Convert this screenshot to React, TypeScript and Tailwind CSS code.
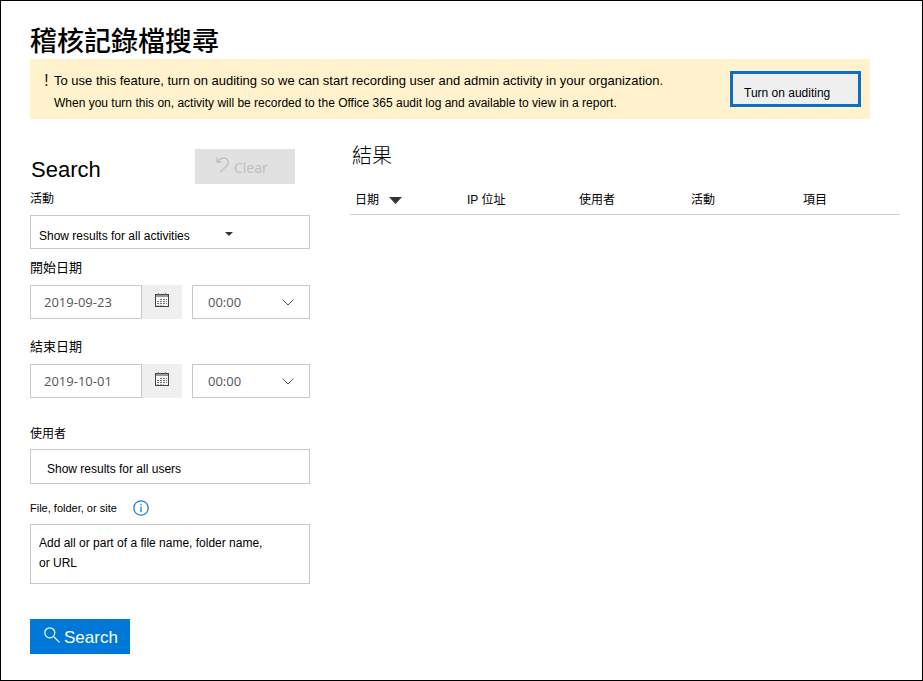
import React from "react";

const UI = "font-['Liberation_Sans','Noto_Sans_CJK_TC',sans-serif]";
const HUMANIST = "font-['Open_Sans','Noto_Sans_CJK_TC',sans-serif]";

function CalendarIcon() {
  return (
    <svg width="14" height="14" viewBox="0 0 14 14" aria-hidden="true" shapeRendering="crispEdges">
      <rect x="0" y="1" width="14" height="13" fill="#444" />
      <rect x="1" y="2" width="12" height="2" fill="#999" />
      <rect x="1" y="4" width="12" height="9" fill="#f4f4f4" />
      <path d="M3.5 0v2M10.5 0v2" stroke="#777" />
      <path d="M5 6.500h7M2 8.500h10M2 10.500h10" stroke="#777" strokeDasharray="2 1" />
      <path d="M2 12.500h7" stroke="#aaa" strokeDasharray="2 1" />
    </svg>
  );
}

function UndoIcon() {
  return (
    <svg width="14" height="16" viewBox="0 0 14 16" fill="none" stroke="currentColor" strokeWidth="1.3" aria-hidden="true">
      <path d="M1 0.5V5h4.5" />
      <path d="M1 5C3 2.2 5.2 1.2 7.6 1.2c2.700 0 4.600 1.900 4.600 4.200 0 1.500-.6 2.500-1.600 3.500L4 15.400" />
    </svg>
  );
}

function MagnifierIcon() {
  return (
    <svg width="16" height="16" viewBox="0 0 16 16" fill="none" stroke="currentColor" strokeWidth="1.2" aria-hidden="true">
      <circle cx="5.800" cy="5.800" r="5" />
      <path d="M9.400 9.400L15.500 15.400" />
    </svg>
  );
}

function InfoIcon() {
  return (
    <svg width="16" height="16" viewBox="0 0 16 16" fill="none" aria-hidden="true">
      <circle cx="8" cy="8" r="7.200" stroke="#1a7fd4" strokeWidth="1.300" />
      <path d="M8 6.500V12M8 4v1.300" stroke="#1a7fd4" strokeWidth="1.300" />
    </svg>
  );
}

function DateRow({ id, label, value }: { id: string; label: string; value: string }) {
  return (
    <div>
      <label htmlFor={id} className="block text-[13px] leading-5">
        {label}
      </label>
      <div className="mt-[7px] flex">
        <input
          id={id}
          type="text"
          defaultValue={value}
          className={`h-[34px] w-28 border border-[#c8c8c8] bg-white px-[13px] text-[13px] text-[#555] ${HUMANIST}`}
        />
        <button type="button" aria-label={`${label} calendar`} className="flex h-[34px] w-10 justify-center bg-[#efefef] pt-2">
          <CalendarIcon />
        </button>
        <div className="relative ml-2.5 flex-1">
          <select
            aria-label={`${label} time`}
            className={`h-[34px] w-full appearance-none border border-[#c8c8c8] bg-white px-[15px] pt-0.5 text-[13px] text-[#555] ${HUMANIST}`}
          >
            <option>00:00</option>
          </select>
          <svg className="pointer-events-none absolute right-4 top-3.5" width="12" height="7" viewBox="0 0 12 7" fill="none" stroke="#555" aria-hidden="true">
            <path d="M0.500 0.500L6 6L11.500 0.500" />
          </svg>
        </div>
      </div>
    </div>
  );
}

function SearchForm() {
  return (
    <form className="w-[280px] shrink-0 pt-[30px]" onSubmit={(e) => e.preventDefault()}>
      <div className="flex items-start justify-between pr-[15px]">
        <h2 className="pl-px pt-2 text-[22px] leading-[26px]">Search</h2>
        <button
          type="button"
          className={`flex h-[35px] w-[100px] items-start gap-1 bg-[#e1e1e1] pl-[21px] pt-2 text-[#bdbdbd] ${HUMANIST}`}
        >
          <UndoIcon />
          <span className="text-[14px] leading-[22px]">Clear</span>
        </button>
      </div>

      <label htmlFor="activities" className="mt-[5px] block text-[12px] leading-5">
        活動
      </label>
      <div className="relative mt-1.5">
        <select id="activities" className="block h-[34px] w-full appearance-none border border-[#c8c8c8] bg-white px-2 pt-2 text-[12px]">
          <option>Show results for all activities</option>
        </select>
        <svg className="pointer-events-none absolute left-[195px] top-[17px]" width="8" height="4" viewBox="0 0 8 4" aria-hidden="true">
          <path d="M0 0h8L4 4z" fill="#333" />
        </svg>
      </div>

      <div className="mt-[9px]">
        <DateRow id="start-date" label="開始日期" value="2019-09-23" />
      </div>
      <div className="mt-[18px]">
        <DateRow id="end-date" label="結束日期" value="2019-10-01" />
      </div>

      <label htmlFor="users" className="mt-[26px] block text-[12px] leading-5">
        使用者
      </label>
      <input
        id="users"
        type="text"
        defaultValue="Show results for all users"
        className="mt-[5px] block h-[35px] w-full border border-[#c8c8c8] bg-white px-4 pt-1 text-[12px]"
      />

      <div className="mt-3.5 flex items-center">
        <label htmlFor="file" className="text-[11px] leading-5">
          File, folder, or site
        </label>
        <button type="button" aria-label="Info" className="ml-4">
          <InfoIcon />
        </button>
      </div>
      <textarea
        id="file"
        defaultValue={"Add all or part of a file name, folder name,\nor URL"}
        className="mt-1.5 block h-[60px] w-full resize-none overflow-hidden border border-[#c8c8c8] bg-white px-2 py-2 text-[12px] leading-5"
      />

      <button type="submit" className="mt-[35px] flex h-[35px] w-[100px] items-start gap-1 bg-[#0078d7] pl-3.5 pt-2 text-white">
        <MagnifierIcon />
        <span className="text-[17px] leading-[22px]">Search</span>
      </button>
    </form>
  );
}

function Results() {
  return (
    <section className="min-w-0 flex-1 pt-[25px]">
      <h2 className="pl-0.5 text-[20px] font-light leading-6">結果</h2>
      <table className="mt-[22px] w-full table-fixed text-left text-[12px] leading-5">
        <thead>
          <tr className="border-b border-[#d0d0d0]">
            <th scope="col" className="w-28 pb-1 pl-[5px] font-normal">
              <button type="button" className="flex items-center gap-2.5">
                日期
                <svg width="13" height="7" viewBox="0 0 13 7" aria-hidden="true">
                  <path d="M0 0h13L6.500 7z" fill="#333" />
                </svg>
              </button>
            </th>
            <th scope="col" className="w-28 pb-1 pl-[5px] font-normal">IP 位址</th>
            <th scope="col" className="w-28 pb-1 pl-[5px] font-normal">使用者</th>
            <th scope="col" className="w-28 pb-1 pl-[5px] font-normal">活動</th>
            <th scope="col" className="pb-1 pl-[5px] font-normal">項目</th>
          </tr>
        </thead>
      </table>
    </section>
  );
}

export default function App() {
  return (
    <main className={`min-h-screen border border-black bg-white pl-[29px] pr-[22px] text-black ${UI}`}>
      <h1 className="pt-6 text-[27px] font-medium leading-[34px]">稽核記錄檔搜尋</h1>
      <div className="mr-[30px] flex h-[60px] items-start justify-between bg-[#fff2cd] pr-[9px]">
        <div className="flex pl-3.5 pt-3">
          <span className="w-2.5 text-[17px] leading-5 text-[#222]">!</span>
          <div>
            <p className="text-[13px] leading-5">
              To use this feature, turn on auditing so we can start recording user and admin activity in your organization.
            </p>
            <p className="mt-0.5 text-[12px] leading-5">
              When you turn this on, activity will be recorded to the Office 365 audit log and available to view in a report.
            </p>
          </div>
        </div>
        <button type="button" className="mt-3 h-9 w-[131px] border-[3px] border-[#106ebe] bg-[#efefef] pl-[11px] pt-2 text-left text-[12px] leading-5">
          Turn on auditing
        </button>
      </div>
      <div className="flex gap-10">
        <SearchForm />
        <Results />
      </div>
    </main>
  );
}
